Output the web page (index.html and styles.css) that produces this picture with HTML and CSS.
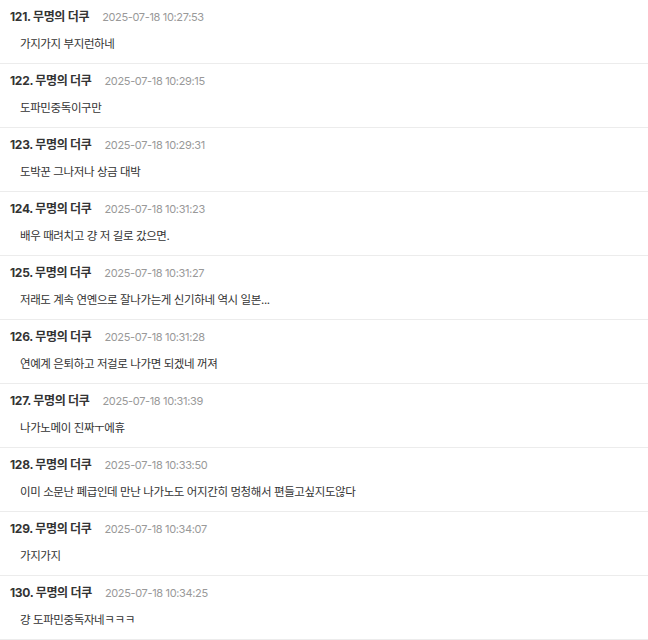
FILE: index.html
```html
<!DOCTYPE html>
<html lang="ko">
<head>
    <meta charset="UTF-8">
    <meta name="viewport" content="width=device-width, initial-scale=1.0">
    <title>댓글</title>
    <link rel="stylesheet" href="styles.css">
</head>
<body>

<div class="comment-list">
    <div class="comment">
        <div class="comment-head"><span class="author">121. 무명의 더쿠</span><span class="date">2025-07-18 10:27:53</span></div>
        <div class="comment-body">가지가지 부지런하네</div>
    </div>
    <div class="comment">
        <div class="comment-head"><span class="author">122. 무명의 더쿠</span><span class="date">2025-07-18 10:29:15</span></div>
        <div class="comment-body">도파민중독이구만</div>
    </div>
    <div class="comment">
        <div class="comment-head"><span class="author">123. 무명의 더쿠</span><span class="date">2025-07-18 10:29:31</span></div>
        <div class="comment-body">도박꾼 그나저나 상금 대박</div>
    </div>
    <div class="comment">
        <div class="comment-head"><span class="author">124. 무명의 더쿠</span><span class="date">2025-07-18 10:31:23</span></div>
        <div class="comment-body">배우 때려치고 걍 저 길로 갔으면.</div>
    </div>
    <div class="comment">
        <div class="comment-head"><span class="author">125. 무명의 더쿠</span><span class="date">2025-07-18 10:31:27</span></div>
        <div class="comment-body">저래도 계속 연옌으로 잘나가는게 신기하네 역시 일본...</div>
    </div>
    <div class="comment">
        <div class="comment-head"><span class="author">126. 무명의 더쿠</span><span class="date">2025-07-18 10:31:28</span></div>
        <div class="comment-body">연예계 은퇴하고 저걸로 나가면 되겠네 꺼져</div>
    </div>
    <div class="comment">
        <div class="comment-head"><span class="author">127. 무명의 더쿠</span><span class="date">2025-07-18 10:31:39</span></div>
        <div class="comment-body">나가노메이 진짜ㅜ에휴</div>
    </div>
    <div class="comment">
        <div class="comment-head"><span class="author">128. 무명의 더쿠</span><span class="date">2025-07-18 10:33:50</span></div>
        <div class="comment-body">이미 소문난 폐급인데 만난 나가노도 어지간히 멍청해서 편들고싶지도않다</div>
    </div>
    <div class="comment">
        <div class="comment-head"><span class="author">129. 무명의 더쿠</span><span class="date">2025-07-18 10:34:07</span></div>
        <div class="comment-body">가지가지</div>
    </div>
    <div class="comment">
        <div class="comment-head"><span class="author">130. 무명의 더쿠</span><span class="date">2025-07-18 10:34:25</span></div>
        <div class="comment-body">걍 도파민중독자네ㅋㅋㅋ</div>
    </div>
</div>

</body>
</html>
```

FILE: styles.css
```css
body {
    font-family: Inter, "Noto Sans CJK KR", sans-serif;
    background-color: #fff;
    color: #333;
    margin: 0;
    padding: 0;
}
.comment {
    padding: 8px 10px 10px;
    border-bottom: 1px solid #ececec;
}
.comment-head {
    display: flex;
    align-items: center;
    gap: 13px;
    height: 18px;
    line-height: 18px;
}
.author {
    font-size: 12px;
    font-weight: 700;
    letter-spacing: -0.3px;
    color: #333;
}
.date {
    font-size: 11px;
    letter-spacing: -0.35px;
    color: #999;
}
.comment-body {
    margin-top: 9px;
    padding-left: 10px;
    font-size: 11.5px;
    line-height: 18px;
    letter-spacing: -0.4px;
    color: #333;
}
```
